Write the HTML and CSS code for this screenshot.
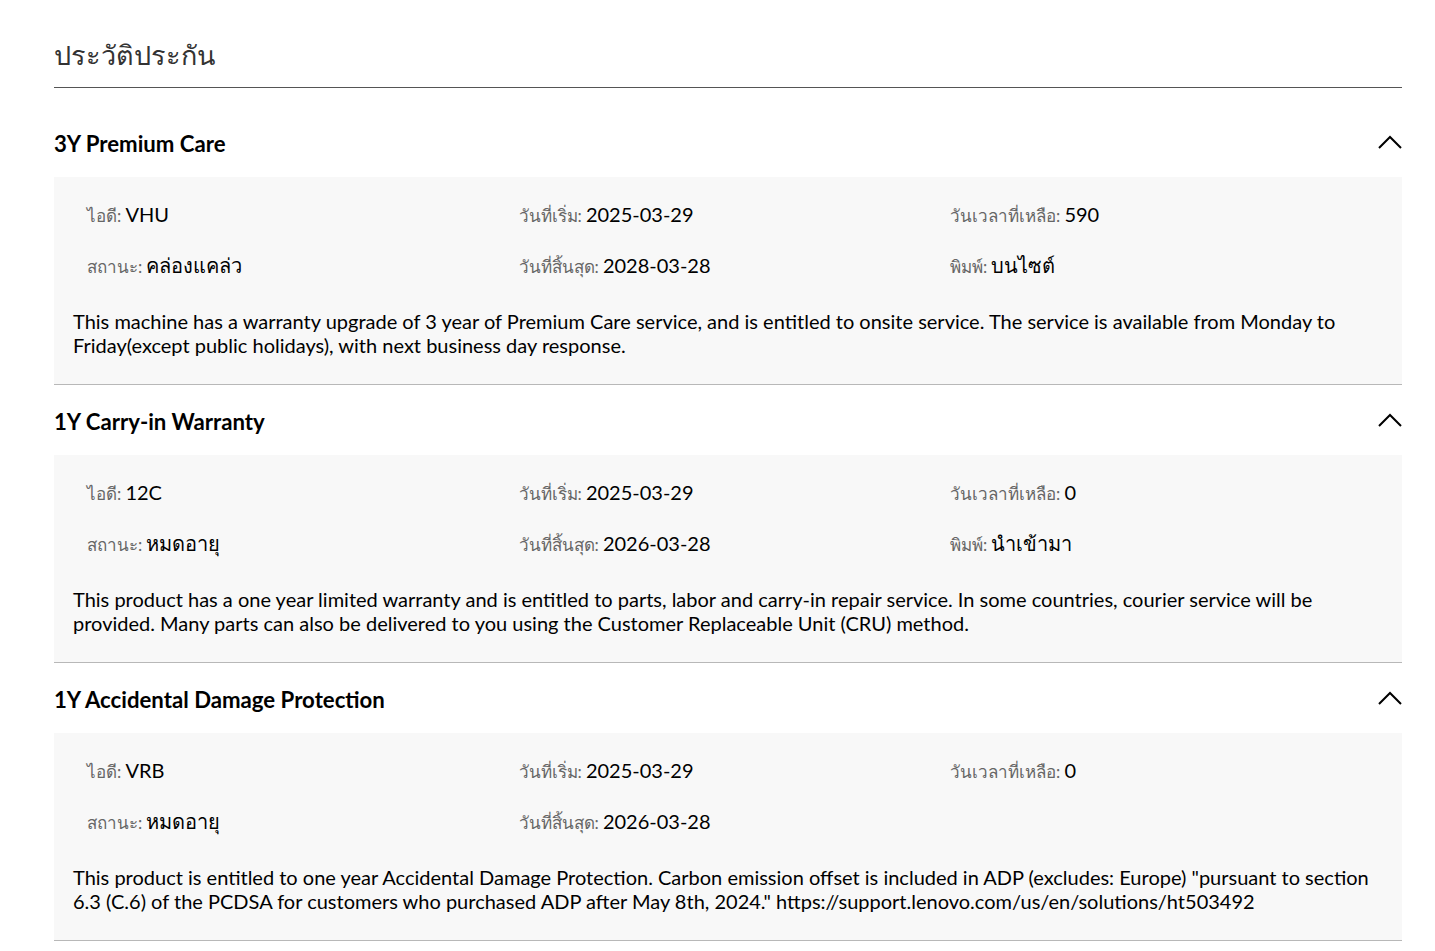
FILE: index.html
```html
<!DOCTYPE html>
<html lang="th">
<head>
<meta charset="utf-8">
<title>ประวัติประกัน</title>
<link rel="stylesheet" href="styles.css">
</head>
<body>
<main class="page">
  <h1 class="page-title">ประวัติประกัน</h1>

  <section class="warranty warranty-first">
    <header class="warranty-head">
      <h2 class="warranty-name">3Y Premium Care</h2>
      <svg class="chevron" width="24" height="14" viewBox="0 0 24 14" aria-hidden="true"><polyline points="1,13 12,2 23,13" fill="none" stroke="#000" stroke-width="2"/></svg>
    </header>
    <div class="warranty-body">
      <div class="facts">
        <div class="fact"><span class="label">ไอดี:</span> <span class="value">VHU</span></div>
        <div class="fact"><span class="label">วันที่เริ่ม:</span> <span class="value">2025-03-29</span></div>
        <div class="fact"><span class="label">วันเวลาที่เหลือ:</span> <span class="value">590</span></div>
        <div class="fact"><span class="label">สถานะ:</span> <span class="value">คล่องแคล่ว</span></div>
        <div class="fact"><span class="label">วันที่สิ้นสุด:</span> <span class="value">2028-03-28</span></div>
        <div class="fact"><span class="label">พิมพ์:</span> <span class="value">บนไซต์</span></div>
      </div>
      <p class="desc">This machine has a warranty upgrade of 3 year of Premium Care service, and is entitled to onsite service. The service is available from Monday to Friday(except public holidays), with next business day response.</p>
    </div>
  </section>

  <section class="warranty">
    <header class="warranty-head">
      <h2 class="warranty-name">1Y Carry-in Warranty</h2>
      <svg class="chevron" width="24" height="14" viewBox="0 0 24 14" aria-hidden="true"><polyline points="1,13 12,2 23,13" fill="none" stroke="#000" stroke-width="2"/></svg>
    </header>
    <div class="warranty-body">
      <div class="facts">
        <div class="fact"><span class="label">ไอดี:</span> <span class="value">12C</span></div>
        <div class="fact"><span class="label">วันที่เริ่ม:</span> <span class="value">2025-03-29</span></div>
        <div class="fact"><span class="label">วันเวลาที่เหลือ:</span> <span class="value">0</span></div>
        <div class="fact"><span class="label">สถานะ:</span> <span class="value">หมดอายุ</span></div>
        <div class="fact"><span class="label">วันที่สิ้นสุด:</span> <span class="value">2026-03-28</span></div>
        <div class="fact"><span class="label">พิมพ์:</span> <span class="value">นำเข้ามา</span></div>
      </div>
      <p class="desc">This product has a one year limited warranty and is entitled to parts, labor and carry-in repair service. In some countries, courier service will be provided. Many parts can also be delivered to you using the Customer Replaceable Unit (CRU) method.</p>
    </div>
  </section>

  <section class="warranty">
    <header class="warranty-head">
      <h2 class="warranty-name">1Y Accidental Damage Protection</h2>
      <svg class="chevron" width="24" height="14" viewBox="0 0 24 14" aria-hidden="true"><polyline points="1,13 12,2 23,13" fill="none" stroke="#000" stroke-width="2"/></svg>
    </header>
    <div class="warranty-body">
      <div class="facts">
        <div class="fact"><span class="label">ไอดี:</span> <span class="value">VRB</span></div>
        <div class="fact"><span class="label">วันที่เริ่ม:</span> <span class="value">2025-03-29</span></div>
        <div class="fact"><span class="label">วันเวลาที่เหลือ:</span> <span class="value">0</span></div>
        <div class="fact"><span class="label">สถานะ:</span> <span class="value">หมดอายุ</span></div>
        <div class="fact"><span class="label">วันที่สิ้นสุด:</span> <span class="value">2026-03-28</span></div>
        <div class="fact"></div>
      </div>
      <p class="desc">This product is entitled to one year Accidental Damage Protection. Carbon emission offset is included in ADP (excludes: Europe) "pursuant to section 6.3 (C.6) of the PCDSA for customers who purchased ADP after May 8th, 2024." https://support.lenovo.com/us/en/solutions/ht503492</p>
    </div>
  </section>
</main>
</body>
</html>
```

FILE: styles.css
```css
html, body {
  margin: 0;
  padding: 0;
  background: #fff;
}

body {
  font-family: Lato, "Noto Sans", "DejaVu Sans", sans-serif;
  color: #000;
}

.page {
  padding: 35px 33px 0 54px;
}

.page-title {
  margin: 0;
  padding-bottom: 12px;
  font-size: 27px;
  line-height: 40px;
  font-weight: 500;
  color: #333;
  border-bottom: 1px solid #555;
}

.warranty {
  border-bottom: 1px solid #b8b8b8;
}

.warranty-first {
  margin-top: 19px;
}

.warranty-head {
  display: flex;
  align-items: center;
  justify-content: space-between;
  height: 70px;
  padding-top: 4px;
  box-sizing: border-box;
}

.warranty-name {
  margin: 0;
  font-size: 22.2px;
  line-height: 26px;
  font-weight: 700;
}

.chevron {
  display: block;
  margin-top: -4px;
}

.warranty-body {
  background: #f8f8f8;
  padding: 22px 19px 27px;
}

.facts {
  display: grid;
  grid-template-columns: repeat(3, 431.5px);
  row-gap: 21px;
}

.fact {
  padding-left: 14px;
  height: 30px;
  line-height: 30px;
  white-space: nowrap;
}

.label {
  font-size: 17px;
  color: #666;
}

.value {
  font-size: 20px;
  color: #000;
}

.desc {
  margin: 29px 0 0;
  font-size: 20px;
  line-height: 24px;
  color: #000;
}
```
